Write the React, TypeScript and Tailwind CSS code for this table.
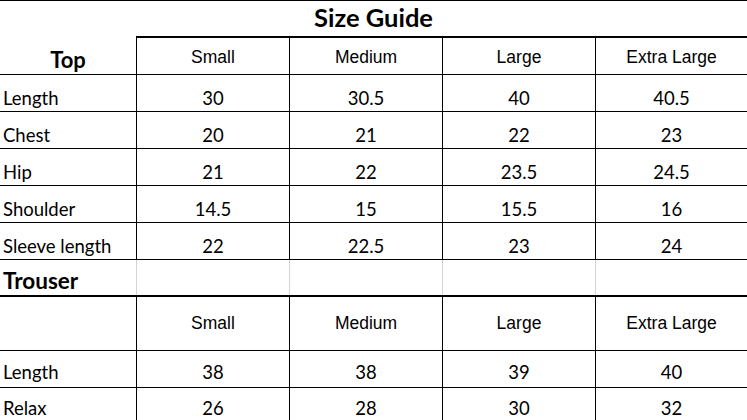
import React from "react";

const cols = "grid grid-cols-[136px_153px_153px_153px_152px]";
const label = "font-['Lato','Open_Sans',sans-serif] text-[18.5px] leading-none";
const head = "font-['Liberation_Sans',Arial,sans-serif] text-[17.5px] leading-none";

const top = [
  ["Length", "30", "30.5", "40", "40.5"],
  ["Chest", "20", "21", "22", "23"],
  ["Hip", "21", "22", "23.5", "24.5"],
  ["Shoulder", "14.5", "15", "15.5", "16"],
  ["Sleeve length", "22", "22.5", "23", "24"],
];

const trouser = [
  ["Length", "38", "38", "39", "40"],
  ["Relax", "26", "28", "30", "32"],
];

const sizes = ["Small", "Medium", "Large", "Extra Large"];

function DataRow({ row, pad = "pb-[4px]", h = "h-[37px]" }: { row: string[]; pad?: string; h?: string }) {
  return (
    <div className={`${cols} ${h} border-b border-black`}>
      <div className={`${label} ${pad} flex items-end pl-[3px]`}>{row[0]}</div>
      {row.slice(1).map((v, i) => (
        <div key={i} className={`${label} ${pad} flex items-end justify-center border-l border-black`}>
          {v}
        </div>
      ))}
    </div>
  );
}

export default function App() {
  return (
    <div className="w-[747px] h-[420px] overflow-hidden bg-white text-black border-t border-black">
      {/* title */}
      <div className="grid grid-cols-[136px_1fr] grid-rows-[37px]">
        <div className="col-start-2 row-start-1 border-b-2 border-black" />
        <div className="col-start-1 col-span-2 row-start-1 flex items-center justify-center pb-[3px] font-['Lato',sans-serif] font-bold text-[25.5px] leading-none">
          Size Guide
        </div>
      </div>

      {/* top header */}
      <div className={`${cols} h-[37px] border-b border-black`}>
        <div className="flex items-end justify-center pb-[3px] font-['Lato',sans-serif] font-bold text-[22px] leading-none">
          Top
        </div>
        {sizes.map((s) => (
          <div key={s} className={`${head} flex items-center justify-center pt-[3px] border-l border-black`}>
            {s}
          </div>
        ))}
      </div>

      {top.map((r) => (
        <DataRow key={r[0]} row={r} />
      ))}

      {/* trouser title */}
      <div className={`${cols} h-[37px] border-b-2 border-black`}>
        <div className="flex items-end pb-[3px] pl-[3px] font-['Lato',sans-serif] font-bold text-[22.5px] leading-none">
          Trouser
        </div>
        {sizes.map((s) => (
          <div key={s} className="border-l border-[#d4d4d4]" />
        ))}
      </div>

      {/* trouser header */}
      <div className={`${cols} h-[54px] border-b border-black`}>
        <div />
        {sizes.map((s) => (
          <div key={s} className={`${head} flex items-center justify-center pt-[1px] border-l border-black`}>
            {s}
          </div>
        ))}
      </div>

      <DataRow row={trouser[0]} pad="pb-[6px]" />
      <DataRow row={trouser[1]} pad="pb-[4px]" h="h-[34px]" />
    </div>
  );
}
